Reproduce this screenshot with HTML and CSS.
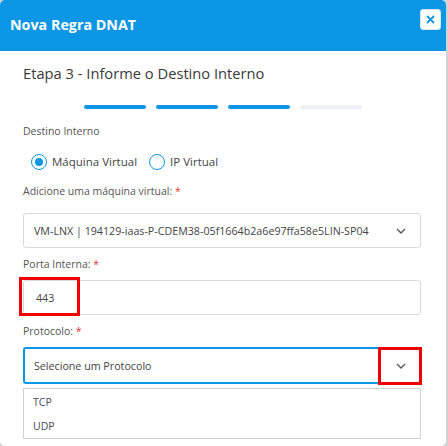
FILE: index.html
```html
<!DOCTYPE html>
<html lang="pt-BR">
<head>
<meta charset="utf-8">
<title>Nova Regra DNAT</title>
<link rel="stylesheet" href="styles.css">
</head>
<body>
<div class="modal">
  <header class="modal-header">
    <h1 class="modal-title">Nova Regra DNAT</h1>
    <button class="close-btn" aria-label="Fechar">
      <svg width="9" height="9" viewBox="0 0 9 9"><path d="M1.5 1.5 L7.5 7.5 M7.5 1.5 L1.5 7.5" stroke="#0c96e6" stroke-width="1.8" stroke-linecap="round"/></svg>
    </button>
  </header>

  <div class="modal-body">
    <h2 class="step-title">Etapa 3 - Informe o Destino Interno</h2>

    <div class="steps">
      <span class="step active"></span>
      <span class="step active"></span>
      <span class="step active"></span>
      <span class="step"></span>
    </div>

    <div class="label label-first">Destino Interno</div>
    <div class="radios">
      <label class="radio"><span class="radio-dot checked"></span>Máquina Virtual</label>
      <label class="radio"><span class="radio-dot"></span>IP Virtual</label>
    </div>

    <div class="label label-vm">Adicione uma máquina virtual: <span class="req">*</span></div>
    <div class="field select">
      <span class="select-text">VM-LNX | 194129-iaas-P-CDEM38-05f1664b2a6e97ffa58e5LIN-SP04</span>
      <svg class="chev" width="10" height="6" viewBox="0 0 10 6"><path d="M1 1 L5 5 L9 1" fill="none" stroke="#555" stroke-width="1.3"/></svg>
    </div>

    <div class="label">Porta Interna: <span class="req">*</span></div>
    <div class="field input">
      <span class="input-text">443</span>
      <span class="mark mark-port"></span>
    </div>

    <div class="label">Protocolo: <span class="req">*</span></div>
    <div class="field select focused">
      <span class="select-text">Selecione um Protocolo</span>
      <svg class="chev" width="10" height="6" viewBox="0 0 10 6"><path d="M1 1 L5 5 L9 1" fill="none" stroke="#555" stroke-width="1.3"/></svg>
      <span class="mark mark-chev"></span>
    </div>
    <ul class="options">
      <li class="option">TCP</li>
      <li class="option">UDP</li>
    </ul>
  </div>
</div>
</body>
</html>
```

FILE: styles.css
```css
* { box-sizing: border-box; }

html, body {
  margin: 0;
  padding: 0;
}

body {
  background: #d4d4d4;
  font-family: "Open Sans", "DejaVu Sans", sans-serif;
  width: 448px;
  height: 446px;
  overflow: hidden;
}

.modal {
  width: 446px;
  height: 446px;
  background: #fff;
  border-radius: 5px;
  overflow: hidden;
}

.modal-header {
  height: 51px;
  background: #0c96e6;
  display: flex;
  justify-content: space-between;
  align-items: flex-start;
  padding: 0 5px 0 10px;
}

.modal-title {
  margin: 15px 0 0;
  font-size: 14.3px;
  line-height: 19px;
  font-weight: 700;
  color: #fff;
}

.close-btn {
  margin-top: 9px;
  width: 21px;
  height: 21px;
  padding: 0;
  border: 1px solid #d8e6f0;
  border-radius: 3px;
  background: #fff;
  display: flex;
  align-items: center;
  justify-content: center;
}

.modal-body {
  padding: 0 25px 0 23px;
}

.step-title {
  margin: 13px 0 0;
  font-size: 14.7px;
  line-height: 19px;
  font-weight: 400;
  color: #3a3a3a;
}

.steps {
  display: flex;
  justify-content: center;
  gap: 10px;
  margin: 22px 0 0 2px;
}

.step {
  width: 62px;
  height: 4px;
  border-radius: 3px;
  background: #edf1f5;
}

.step.active {
  background: #0c96e6;
}

.label {
  font-size: 10.5px;
  line-height: 14px;
  color: #555;
  margin-top: 9px;
}

.label-first {
  margin-top: 15px;
}

.label-vm {
  margin-top: 14px;
}

.req {
  color: #e53935;
}

.radios {
  display: flex;
  gap: 12px;
  margin: 16px 0 0 8px;
}

.radio {
  display: flex;
  align-items: center;
  gap: 5px;
  font-size: 11.5px;
  line-height: 16px;
  color: #444;
}

.radio-dot {
  width: 16px;
  height: 16px;
  border: 1.5px solid #0c96e6;
  border-radius: 50%;
  display: flex;
  align-items: center;
  justify-content: center;
}

.radio-dot.checked::after {
  content: "";
  width: 8px;
  height: 8px;
  border-radius: 50%;
  background: #0c96e6;
}

.field {
  position: relative;
  height: 35px;
  margin-top: 9px;
  border: 1px solid #d9d9d9;
  border-radius: 3px;
  display: flex;
  align-items: center;
  padding: 0 14px 0 10px;
  font-size: 10.7px;
  color: #444;
}

.label-vm + .field {
  margin-top: 15px;
}

.select {
  justify-content: space-between;
}

.select.focused {
  height: 37px;
  border: 2px solid #0c96e6;
  padding-left: 9px;
  padding-right: 13px;
}

.input {
  padding-left: 12px;
}

.options {
  list-style: none;
  margin: 4px 0 0;
  padding: 1px 0 0;
  border: 1px solid #d2d2d2;
}

.option {
  height: 24px;
  line-height: 24px;
  padding-left: 9px;
  font-size: 10.5px;
  color: #4a4a5a;
}

/* red highlight frames drawn over the fields */
.mark {
  position: absolute;
  border: 3px solid #f00000;
}

.mark-port {
  left: -5px;
  top: -4px;
  width: 61px;
  height: 39px;
}

.mark-chev {
  right: -3px;
  top: -2px;
  width: 44px;
  height: 38px;
}
```
